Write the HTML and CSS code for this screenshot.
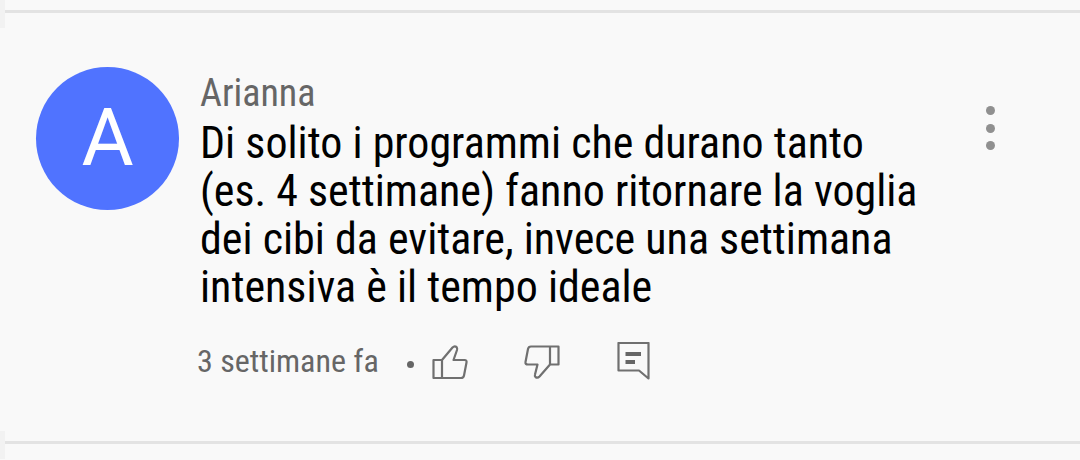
FILE: index.html
```html
<!DOCTYPE html>
<html lang="it">
<head>
  <meta charset="UTF-8" />
  <title>Commenti</title>
  <meta name="viewport" content="width=device-width, initial-scale=1.0" />
  <link rel="stylesheet" href="styles.css">
</head>
<body>

<div class="edge"></div>

<!-- Comment -->
<article class="comment">
  <div class="avatar">A</div>
  <div class="content">
    <div class="author">Arianna</div>
    <p class="text">Di solito i programmi che durano tanto<br>(es. 4 settimane) fanno ritornare la voglia<br>dei cibi da evitare, invece una settimana<br>intensiva è il tempo ideale</p>
    <div class="actions">
      <span class="time">3 settimane fa</span>
      <span class="dot"></span>
      <button type="button" aria-label="Mi piace">
        <svg width="36" height="38" viewBox="0 0 36 38"><path d="M1.5 18H10V36H1.5ZM10 18L20.500 5.500Q22.500 3.500 24.500 5Q25.500 6 25 8L21.500 18H32.500Q35 18 34.500 20.500L32 33.500Q31.500 36 29 36H10" /></svg>
      </button>
      <button type="button" aria-label="Non mi piace">
        <svg width="36" height="38" viewBox="0 0 36 38"><path d="M34.500 4.500H26V22.500H34.500ZM26 22.500L15.500 34.500Q13.500 36.500 11.500 35Q10.500 34 11 32.500L13.500 22.500H4Q1 22.500 1.500 20L4 7Q4.500 4.500 7 4.500H26" /></svg>
      </button>
      <button type="button" aria-label="Rispondi">
        <svg width="36" height="38" viewBox="0 0 36 38"><path d="M2.500 1H32.500V36.500L23 28.500H2.500Z" /><path class="lines" d="M9.500 12H25M9.500 20H19" /></svg>
      </button>
    </div>
  </div>
  <button class="menu-btn" type="button" aria-label="Altro">
    <span></span><span></span><span></span>
  </button>
</article>

<div class="edge"></div>

</body>
</html>
```

FILE: styles.css
```css
* { box-sizing:border-box; }
body { background:#f9f9f9; color:#000; font-family:"Roboto Condensed","Liberation Sans Narrow",Roboto,sans-serif; margin:0; }

.edge { height:28px; display:flex; border-left:5px solid #f2f2f2; }
.edge::after { content:""; flex:1; height:3px; margin-top:10px; background:#e3e3e3; }

.comment { display:flex; align-items:flex-start; padding:39px 80px 50px 36px; }
.avatar { flex:none; width:143px; height:143px; border-radius:50%; background:#5073ff; color:#fff; font-family:Roboto,sans-serif; font-size:80px; line-height:143px; text-align:center; }
.content { flex:1; min-width:0; margin-left:21px; padding-top:2px; }
.author { color:#666; font-size:38px; line-height:48px; }
.text { margin:2px 0 30px; font-size:44px; line-height:48px; white-space:nowrap; }

.actions { display:flex; align-items:center; height:40px; margin-left:-3px; }
.time { color:#666; font-size:32px; line-height:40px; }
.dot { width:7px; height:7px; margin:6px 18px 0 28px; border-radius:50%; background:#666; }
button { padding:0; border:none; background:none; cursor:pointer; }
svg { display:block; fill:none; stroke:#707070; stroke-width:2.2; stroke-linejoin:round; }
.lines { stroke:#666; stroke-width:4; }
.actions button + button { margin-left:56px; }

.menu-btn { flex:none; width:20px; height:44px; margin-top:39px; display:flex; flex-direction:column; align-items:center; justify-content:space-between; }
.menu-btn span { width:9px; height:9px; border-radius:50%; background:#909090; }
```
